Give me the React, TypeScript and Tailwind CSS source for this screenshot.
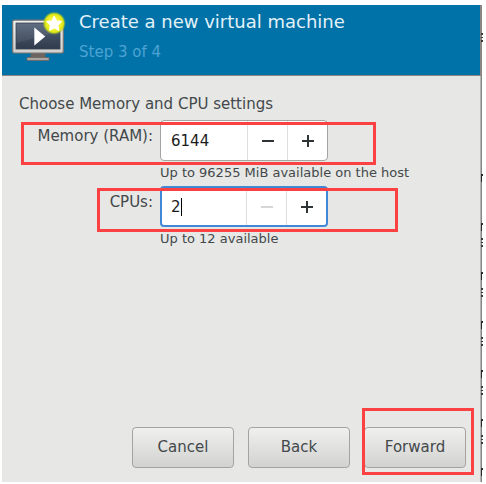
import { useState } from "react";
import type { ReactNode } from "react";

function MachineIcon() {
  return (
    <svg viewBox="0 0 56 50" className="h-[50px] w-14 shrink-0" aria-hidden="true">
      <defs>
        <linearGradient id="screen" x1="0" y1="0" x2="0" y2="1">
          <stop offset="0" stopColor="#56647a" />
          <stop offset="0.5" stopColor="#414d61" />
          <stop offset="1" stopColor="#303b4d" />
        </linearGradient>
        <linearGradient id="bezel" x1="0" y1="0" x2="0" y2="1">
          <stop offset="0" stopColor="#f4f4f2" />
          <stop offset="1" stopColor="#cfcfcd" />
        </linearGradient>
        <radialGradient id="glow">
          <stop offset="0.5" stopColor="#f6f436" />
          <stop offset="0.78" stopColor="#dde512" />
          <stop offset="1" stopColor="#7fb43a" stopOpacity="0" />
        </radialGradient>
      </defs>
      <path d="M19 41h14l1 5H18z" fill="#6b6461" />
      <rect x="15" y="45.5" width="22" height="3" rx="0.5" fill="#aaa5a1" stroke="#6d6560" strokeWidth="0.8" />
      <rect x="0.7" y="8.2" width="50.6" height="32.8" rx="1.5" fill="url(#bezel)" stroke="#7d7470" strokeWidth="1.2" />
      <rect x="4" y="11" width="44" height="26" fill="url(#screen)" stroke="#394352" strokeWidth="0.8" />
      <path d="M4.5 11.5h43v8L4.5 31z" fill="#fff" opacity="0.07" />
      <path d="M22.3 15.5v18L33.3 24.5z" fill="#fff" />
      <circle cx="42.2" cy="11.2" r="11.8" fill="url(#glow)" />
      <path
        d="M42.2 4.4l2.2 4.5 5 .7-3.6 3.5.9 5-4.5-2.4-4.5 2.4.9-5-3.6-3.5 5-.7z"
        fill="#fff"
        stroke="#fff"
        strokeWidth="1.2"
        strokeLinejoin="round"
      />
    </svg>
  );
}

function Highlight({ className }: { className: string }) {
  return <span aria-hidden="true" className={`pointer-events-none absolute z-10 border-3 border-[#fb4142] ${className}`} />;
}

type SpinFieldProps = {
  id: string;
  value: string;
  setValue: (v: string) => void;
  min: number;
  max: number;
  step: number;
  active?: boolean;
};

function SpinField({ id, value, setValue, min, max, step, active }: SpinFieldProps) {
  const amount = Number(value) || min;
  const buttonClass = "flex w-10 items-center justify-center border-l border-[#dededc] text-[#2e3436] disabled:text-[#d6d6d4]";

  return (
    <div className={`relative flex h-[41px] w-[168px] overflow-hidden rounded bg-white ${active ? "border-2 border-[#4189d6]" : "border border-[#a3a39f]"}`}>
      <div className={`relative flex min-w-0 flex-1 items-center ${active ? "pl-[9px]" : "pl-[10px]"}`}>
        <input
          id={id}
          type="text"
          inputMode="numeric"
          value={value}
          onChange={(e) => setValue(e.target.value)}
          className="w-full bg-transparent text-[15px] leading-5 text-[#1c1c1c] outline-none"
        />
        {active && <span className="absolute left-[19px] h-[18px] w-px bg-black" />}
      </div>
      <button type="button" aria-label="Decrease" disabled={amount <= min || active} onClick={() => setValue(String(amount - step))} className={buttonClass}>
        <svg viewBox="0 0 12 12" className="size-3"><path d="M0 6h12" stroke="currentColor" strokeWidth="2" /></svg>
      </button>
      <button type="button" aria-label="Increase" disabled={amount >= max} onClick={() => setValue(String(amount + step))} className={buttonClass}>
        <svg viewBox="0 0 12 12" className="size-3"><path d="M0 6h12M6 0v12" stroke="currentColor" strokeWidth="2" /></svg>
      </button>
    </div>
  );
}

function DialogButton({ children }: { children: ReactNode }) {
  return (
    <button type="button" className="h-[41px] w-[102px] rounded border border-[#a3a39f] bg-linear-to-b from-[#f0f0ef] to-[#d2d2d0] text-[15px] text-[#43494b]">
      {children}
    </button>
  );
}

// Slivers of the window behind the dialog
const stems = [169, 218, 267, 316, 365, 414, 463];
const loops = [28, 233, 283, 332, 381, 430];

function BackgroundEdge() {
  return (
    <svg className="w-[3px] shrink-0 self-stretch" aria-hidden="true">
      <rect width="1" height="100%" fill="#b5b5b3" />
      <rect x="1" width="1" height="100%" fill="#858583" />
      <rect width="2" height="71" fill="#8d8583" />
      {stems.map((y) => (
        <path key={y} d={`M1 ${y}h2v2h-1v6h-1z`} fill="#2b2b2b" />
      ))}
      {loops.map((y) => (
        <path key={y} d={`M1 ${y}h2v2h-2zM1 ${y + 4}h2v1h-2zM1 ${y + 7}h2v2h-2z`} fill="#3a3a3a" />
      ))}
    </svg>
  );
}

export default function App() {
  const [memory, setMemory] = useState("6144");
  const [cpus, setCpus] = useState("2");

  return (
    <div className="flex min-h-screen bg-white pt-[5px] pr-[3px] pb-0.5 pl-0.5 font-['DejaVu_Sans',sans-serif] text-[15px] text-[#43494b]">
      <main className="flex min-w-0 flex-1 flex-col bg-[#e7e7e5]">
        <header className="flex h-[71px] items-start gap-[11px] border-b border-[#8d8583] bg-[#0072a8] pt-[7px] pl-2.5">
          <MachineIcon />
          <div className="whitespace-nowrap">
            <h1 className="text-[18px] leading-5 text-[#e3f1f8]">Create a new virtual machine</h1>
            <p className="mt-2.5 text-[15px] leading-5 text-[#4da3d3]">Step 3 of 4</p>
          </div>
        </header>

        <form className="flex flex-1 flex-col px-[14px] pb-[14px]" onSubmit={(e) => e.preventDefault()}>
          <h2 className="mt-[18px] pl-[3px] leading-5">Choose Memory and CPU settings</h2>

          <div className="mt-1.5 flex flex-col gap-[3px] pl-5">
            <div className="relative flex h-[63px] gap-[7px]">
              <Highlight className="-left-[15px] top-0.5 h-[43px] w-[355px]" />
              <label htmlFor="memory" className="w-[117px] shrink-0 pt-1.5 text-right leading-5 whitespace-nowrap">Memory (RAM):</label>
              <div>
                <SpinField id="memory" value={memory} setValue={setMemory} min={50} max={96255} step={1} />
                <p className="mt-1 text-[13px] leading-4 whitespace-nowrap">Up to 96255 MiB available on the host</p>
              </div>
            </div>
            <div className="relative flex h-[63px] gap-[7px]">
              <Highlight className="left-[61px] top-0.5 h-11 w-[301px]" />
              <label htmlFor="cpus" className="w-[117px] shrink-0 pt-1.5 text-right leading-5">CPUs:</label>
              <div>
                <SpinField id="cpus" value={cpus} setValue={setCpus} min={1} max={12} step={1} active />
                <p className="mt-1 text-[13px] leading-4 whitespace-nowrap">Up to 12 available</p>
              </div>
            </div>
          </div>

          <footer className="mt-auto flex justify-end gap-[14px]">
            <DialogButton>Cancel</DialogButton>
            <DialogButton>Back</DialogButton>
            <div className="relative">
              <DialogButton>Forward</DialogButton>
              <Highlight className="-top-[19px] -left-0.5 h-[67px] w-28" />
            </div>
          </footer>
        </form>
      </main>
      <BackgroundEdge />
    </div>
  );
}
